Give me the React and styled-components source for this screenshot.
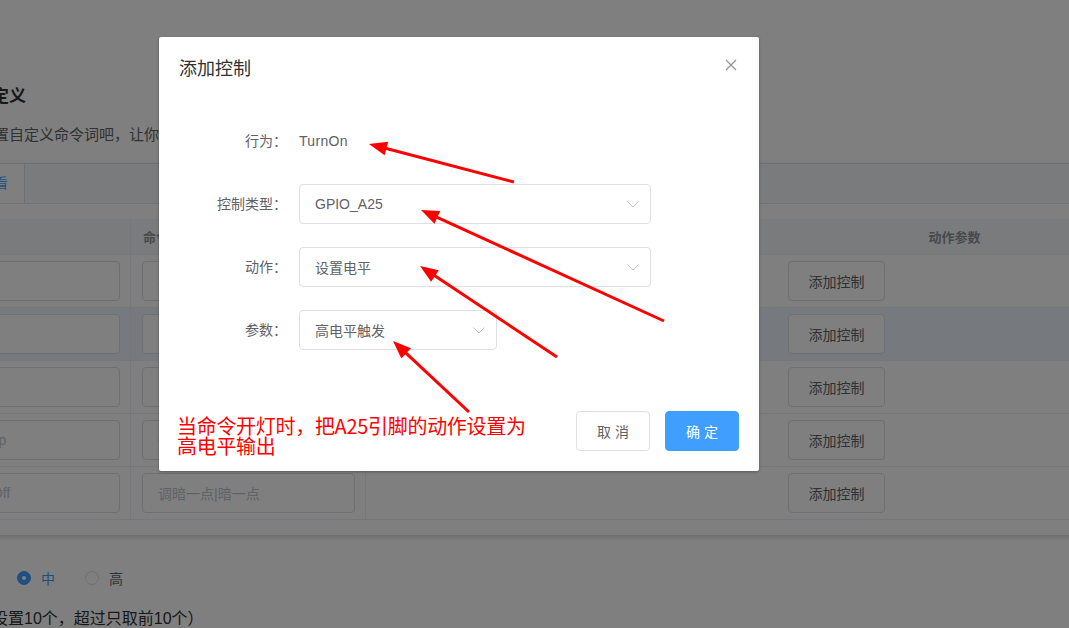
import styled, { createGlobalStyle } from 'styled-components';

const GlobalStyle = createGlobalStyle`
  html, body {
    margin: 0;
    padding: 0;
    background: #fff;
  }
  body {
    font-family: "Liberation Sans", "Noto Sans CJK SC", sans-serif;
    color: #606266;
    overflow: hidden;
  }
`;

const Screen = styled.div`
  position: relative;
  width: 1069px;
  height: 628px;
  overflow: hidden;
`;

/* ---- page under the mask ---- */

const PageBody = styled.div`
  margin-left: -94px;
  padding-top: 85px;
  width: 1500px;
`;

const PageTitle = styled.h2`
  margin: 0 0 0 69px;
  font-size: 17px;
  font-weight: bold;
  line-height: 24px;
  color: #303133;
`;

const PageHint = styled.p`
  margin: 16px 0 0 73px;
  font-size: 15px;
  line-height: 20px;
  color: #606266;
`;

const TabsCard = styled.div`
  margin-top: 18px;
  width: 1400px;
  border: 1px solid #dcdfe6;
  background: #fff;
  box-shadow: 0 2px 4px rgba(0, 0, 0, 0.12), 0 0 6px rgba(0, 0, 0, 0.04);
`;

const TabsHeader = styled.div`
  display: flex;
  height: 39px;
  background: #f5f7fa;
  border-bottom: 1px solid #e4e7ed;
`;

const TabItem = styled.div`
  padding: 0 ${(p) => (p.$active ? 16 : 14)}px;
  line-height: 39px;
  font-size: 14px;
  color: ${(p) => (p.$active ? '#409eff' : '#909399')};
  background: ${(p) => (p.$active ? '#fff' : 'transparent')};
  border-right: 1px solid ${(p) => (p.$active ? '#dcdfe6' : 'transparent')};
`;

const TabsContent = styled.div`
  padding: 15px;
`;

const Table = styled.div`
  display: grid;
  grid-template-columns: 209px 235px 410px 358px;
`;

const HeadCell = styled.div`
  height: 35px;
  border-bottom: 1px solid #ebeef5;
  border-right: 1px solid ${(p) => (p.$divider ? '#ebeef5' : 'transparent')};
  background: #f5f7fa;
  display: flex;
  align-items: center;
  justify-content: ${(p) => (p.$center ? 'center' : 'flex-start')};
  padding: 0 12px;
  font-size: 13px;
  font-weight: bold;
  color: #909399;
`;

const BodyCell = styled.div`
  height: 52px;
  border-bottom: 1px solid #ebeef5;
  border-right: 1px solid ${(p) => (p.$divider ? '#ebeef5' : 'transparent')};
  background: ${(p) => (p.$hl ? '#ecf5ff' : '#fff')};
  display: flex;
  align-items: center;
  padding: 0 ${(p) => p.$padR ?? 12}px 0 ${(p) => p.$padL ?? 12}px;
`;

const TextInput = styled.div`
  flex: 1;
  height: 40px;
  box-sizing: border-box;
  border: 1px solid #dcdfe6;
  border-radius: 4px;
  background: #fff;
  padding: 0 15px;
  display: flex;
  align-items: center;
  font-size: 14px;
  white-space: nowrap;
  overflow: hidden;
  color: #c0c4cc;
`;

const PlainButton = styled.div`
  width: 97px;
  height: 40px;
  box-sizing: border-box;
  border: 1px solid #dcdfe6;
  border-radius: 4px;
  background: #fff;
  display: flex;
  align-items: center;
  justify-content: center;
  font-size: 14px;
  color: #606266;
`;

const OptionRow = styled.div`
  display: flex;
  align-items: center;
  gap: 30px;
  height: 40px;
  margin: 22px 0 0 43px;
`;

const RadioItem = styled.label`
  display: flex;
  align-items: center;
  font-size: 14px;
  color: ${(p) => (p.$checked ? '#409eff' : '#606266')};
`;

const RadioDot = styled.span`
  width: 14px;
  height: 14px;
  box-sizing: border-box;
  border-radius: 50%;
  border: 1px solid ${(p) => (p.$checked ? '#409eff' : '#dcdfe6')};
  background: ${(p) => (p.$checked ? '#409eff' : '#fff')};
  margin-right: 10px;
  display: flex;
  align-items: center;
  justify-content: center;
  &::after {
    content: '';
    width: 4px;
    height: 4px;
    border-radius: 50%;
    background: ${(p) => (p.$checked ? '#fff' : 'transparent')};
  }
`;

const FootNote = styled.p`
  margin: 9px 0 0 38px;
  font-size: 16px;
  line-height: 24px;
  color: #303133;
`;

/* ---- dialog ---- */

const Mask = styled.div`
  position: absolute;
  inset: 0;
  background: rgba(0, 0, 0, 0.5);
`;

const DialogLayer = styled.div`
  position: absolute;
  inset: 0;
  padding: 37px 0 0 159px;
  box-sizing: border-box;
`;

const Dialog = styled.div`
  width: 600px;
  background: #fff;
  border-radius: 2px;
  box-shadow: 0 1px 3px rgba(0, 0, 0, 0.3);
`;

const DialogHeader = styled.div`
  position: relative;
  padding: 20px 20px 10px;
`;

const DialogTitle = styled.span`
  display: block;
  font-size: 18px;
  line-height: 24px;
  color: #303133;
`;

const CloseButton = styled.button`
  position: absolute;
  top: 20px;
  right: 20px;
  width: 16px;
  height: 16px;
  padding: 0;
  border: 0;
  background: none;
  display: flex;
  align-items: center;
  justify-content: center;
`;

const DialogBody = styled.div`
  padding: 30px 20px;
`;

const FormItem = styled.div`
  display: flex;
  margin-bottom: 23px;
  &:last-child {
    margin-bottom: 21px;
  }
`;

const FormLabel = styled.label`
  width: 120px;
  padding-right: 12px;
  box-sizing: border-box;
  text-align: right;
  line-height: 40px;
  font-size: 14px;
  color: #606266;
`;

const FormValue = styled.div`
  line-height: 40px;
  font-size: 14px;
  letter-spacing: 0.3px;
  color: #606266;
`;

const Select = styled.div`
  width: ${(p) => p.$width}px;
  height: 40px;
  box-sizing: border-box;
  border: 1px solid #dcdfe6;
  border-radius: 4px;
  display: flex;
  align-items: center;
  padding: 0 5px 0 15px;
  font-size: 14px;
  color: #606266;
`;

const SelectText = styled.span`
  flex: 1;
`;

const Caret = styled.span`
  width: 25px;
  display: flex;
  justify-content: center;
`;

const DialogFooter = styled.div`
  display: flex;
  justify-content: flex-end;
  gap: 15px;
  padding: 10px 20px 20px;
`;

const Button = styled.button`
  width: 74px;
  height: 40px;
  box-sizing: border-box;
  border-radius: 4px;
  font-family: inherit;
  font-size: 14px;
  border: 1px solid ${(p) => (p.$primary ? '#409eff' : '#dcdfe6')};
  background: ${(p) => (p.$primary ? '#409eff' : '#fff')};
  color: ${(p) => (p.$primary ? '#fff' : '#606266')};
`;

/* ---- annotations ---- */

const Annotations = styled.div`
  position: absolute;
  inset: 0;
  pointer-events: none;
`;

const ArrowCanvas = styled.svg`
  position: absolute;
  inset: 0;
`;

const Note = styled.div`
  position: absolute;
  left: 177px;
  top: 416px;
  font-family: "Noto Sans CJK SC", sans-serif;
  font-size: 20px;
  line-height: 20px;
  letter-spacing: -0.3px;
  color: #f00;
  white-space: nowrap;
`;

const rows = [
  { key: 'TurnOn', words: '打开灯|开灯', hl: false },
  { key: 'LightUp', words: '调亮一点|亮一点', hl: true },
  { key: 'Off', words: '关闭灯|关灯', hl: false },
  { key: 'SpeedUp', words: '快一点|加速', hl: false },
  { key: 'TurnAllOff', words: '调暗一点|暗一点', hl: false },
];

const arrows = [
  { from: [514, 182], to: [369, 144] },
  { from: [664, 321], to: [421, 210] },
  { from: [557, 357], to: [420, 266] },
  { from: [469, 412], to: [393, 341] },
];

function Arrow({ from, to }) {
  const dx = to[0] - from[0];
  const dy = to[1] - from[1];
  const len = Math.hypot(dx, dy);
  const ux = dx / len;
  const uy = dy / len;
  const head = 18;
  const half = 7;
  const bx = to[0] - ux * head;
  const by = to[1] - uy * head;
  const pts = [
    [to[0], to[1]],
    [bx - uy * half, by + ux * half],
    [bx + uy * half, by - ux * half],
  ];
  return (
    <g>
      <line x1={from[0]} y1={from[1]} x2={bx + ux * 2} y2={by + uy * 2} stroke="#f00" strokeWidth="3" />
      <polygon points={pts.map((p) => p.join(',')).join(' ')} fill="#f00" />
    </g>
  );
}

function Chevron() {
  return (
    <svg width="12" height="7" viewBox="0 0 12 7">
      <polyline points="0.5,0.5 6,6 11.5,0.5" fill="none" stroke="#c0c4cc" strokeWidth="1" />
    </svg>
  );
}

export default function App() {
  return (
    <Screen>
      <GlobalStyle />
      <PageBody>
        <PageTitle>自定义</PageTitle>
        <PageHint>设置自定义命令词吧，让你的设备更懂你</PageHint>
        <TabsCard>
          <TabsHeader>
            <TabItem>默认</TabItem>
            <TabItem $active>查看</TabItem>
          </TabsHeader>
          <TabsContent>
            <Table>
              <HeadCell $divider>行为</HeadCell>
              <HeadCell $divider>命令词</HeadCell>
              <HeadCell $center>控制动作</HeadCell>
              <HeadCell $center>动作参数</HeadCell>
              {rows.map((r) => (
                <>
                  <BodyCell key={r.key + 'a'} $hl={r.hl} $divider $padL={10} $padR={10}>
                    <TextInput>{r.key}</TextInput>
                  </BodyCell>
                  <BodyCell key={r.key + 'b'} $hl={r.hl} $divider $padL={11} $padR={10}>
                    <TextInput>{r.words}</TextInput>
                  </BodyCell>
                  <BodyCell key={r.key + 'c'} $hl={r.hl} />
                  <BodyCell key={r.key + 'd'} $hl={r.hl}>
                    <PlainButton>添加控制</PlainButton>
                  </BodyCell>
                </>
              ))}
            </Table>
          </TabsContent>
        </TabsCard>
        <OptionRow>
          <RadioItem>
            <RadioDot />低
          </RadioItem>
          <RadioItem $checked>
            <RadioDot $checked />中
          </RadioItem>
          <RadioItem>
            <RadioDot />高
          </RadioItem>
        </OptionRow>
        <FootNote>（最多设置10个，超过只取前10个）</FootNote>
      </PageBody>

      <Mask />

      <DialogLayer>
        <Dialog>
          <DialogHeader>
            <DialogTitle>添加控制</DialogTitle>
            <CloseButton aria-label="close">
              <svg width="12" height="12" viewBox="0 0 12 12">
                <path d="M1 1 L11 11 M11 1 L1 11" stroke="#909399" strokeWidth="1.2" fill="none" />
              </svg>
            </CloseButton>
          </DialogHeader>
          <DialogBody>
            <FormItem>
              <FormLabel>行为：</FormLabel>
              <FormValue>TurnOn</FormValue>
            </FormItem>
            <FormItem>
              <FormLabel>控制类型：</FormLabel>
              <Select $width={352}>
                <SelectText>GPIO_A25</SelectText>
                <Caret><Chevron /></Caret>
              </Select>
            </FormItem>
            <FormItem>
              <FormLabel>动作：</FormLabel>
              <Select $width={352}>
                <SelectText>设置电平</SelectText>
                <Caret><Chevron /></Caret>
              </Select>
            </FormItem>
            <FormItem>
              <FormLabel>参数：</FormLabel>
              <Select $width={198}>
                <SelectText>高电平触发</SelectText>
                <Caret><Chevron /></Caret>
              </Select>
            </FormItem>
          </DialogBody>
          <DialogFooter>
            <Button>取 消</Button>
            <Button $primary>确 定</Button>
          </DialogFooter>
        </Dialog>
      </DialogLayer>

      <Annotations>
        <ArrowCanvas width="1069" height="628" viewBox="0 0 1069 628">
          {arrows.map((a, i) => (
            <Arrow key={i} from={a.from} to={a.to} />
          ))}
        </ArrowCanvas>
        <Note>
          当命令开灯时，把A25引脚的动作设置为
          <br />
          高电平输出
        </Note>
      </Annotations>
    </Screen>
  );
}
